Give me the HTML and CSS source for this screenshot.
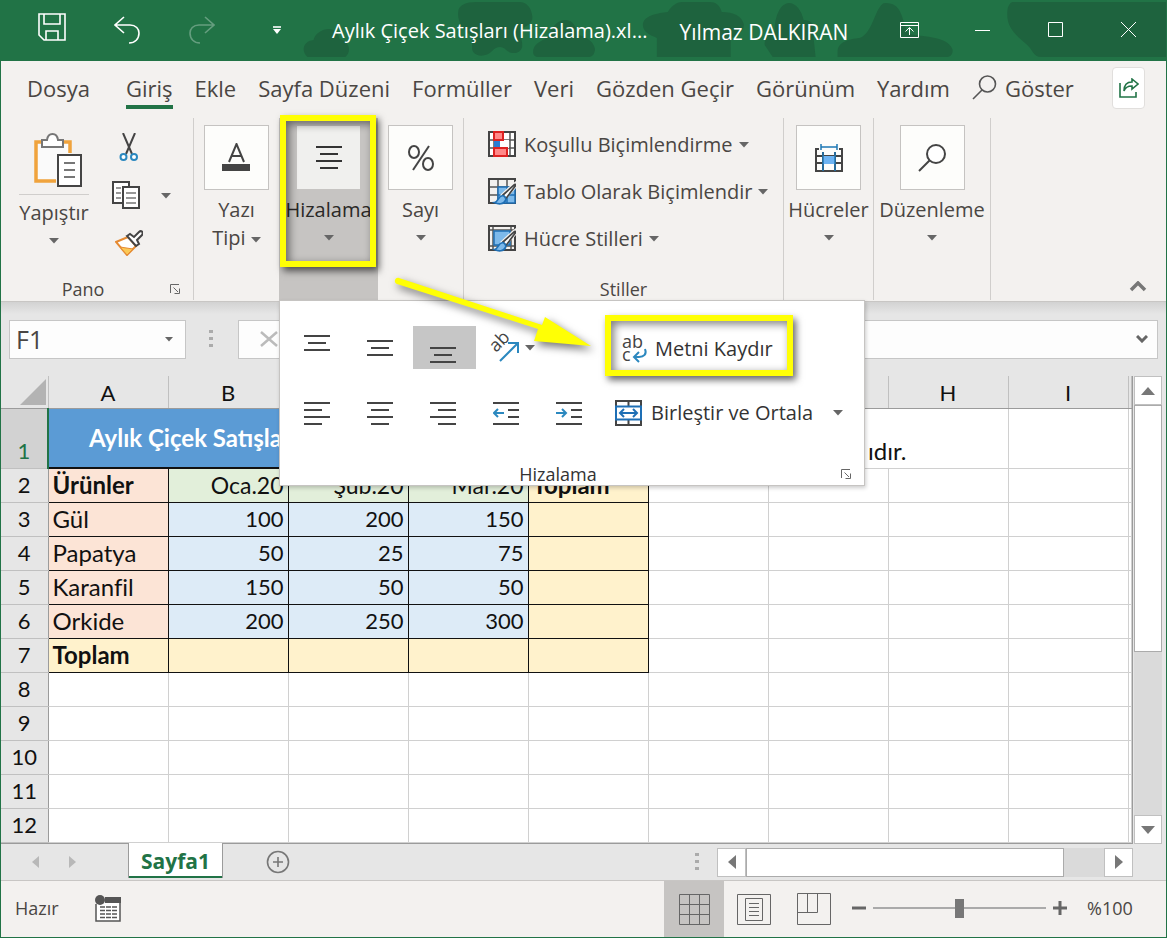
FILE: index.html
```html
<!DOCTYPE html>
<html lang="tr">
<head>
<meta charset="utf-8">
<title>Aylık Çiçek Satışları (Hizalama)</title>
<link rel="stylesheet" href="styles.css">
</head>
<body>
<svg class="defs" aria-hidden="true">
  <symbol id="caret" viewBox="0 0 10 6"><path d="M0 0h10L5 5.500z" fill="currentColor"/></symbol>
  <symbol id="launcher" viewBox="0 0 10 10"><path d="M.5 9V.5H9M3.500 3.500 8 8M9.500 4.500v5h-5" fill="none" stroke="currentColor"/></symbol>
  <symbol id="brush" viewBox="0 0 28 27">
    <path d="M28 3 24 6 12 17l5 5L28 10z" fill="#f3f1ef"/>
    <path d="M15 17 26.500 6.500c2-.5 1 1.500 0 2.500L18 20.500z" fill="#fff" stroke="#444" stroke-width="1.700"/>
    <path d="M14.500 17.500c2 .5 4 2.500 3 5-2 4-7 4-11 2 4-.5 3-6 8-7z" fill="#7db9ea" stroke="#1e6fb5" stroke-width="1.700"/>
  </symbol>
</svg>
<div class="app">
  <header class="titlebar">
    <svg class="camo" viewBox="0 0 1167 61" preserveAspectRatio="none" aria-hidden="true">
      <path d="M307 57c-7-6-4-16 6-17 2-7 9-11 15-11s10 4 11 10c9 1 13 12 6 18zM458 12c0-7 8-10 18-10h43c8 0 12 6 13 13 2 8-6 11-11 14-2 7 2 12 1 18-2 8-12 7-16 3-5-5-10-3-14 1-5 5-14 7-19 1-3-5 1-12-3-17-8-6-13-14-12-23zM533 52c0-8 8-11 15-15 3-9 9-17 17-17 9 0 11 8 14 15 8 2 15 7 16 14 0 5-3 8-6 8h-50c-4 0-6-2-6-5zM643 25c0-9 14-12 25-13 4-7 10-10 14-10h28c6 0 10 3 12 10 12 0 20 4 22 12 1 9-10 11-13 15v18h-74v-19c-7-3-14-6-14-13zM765 45c-1-7 5-10 10-14 0-14 5-27 14-28 8 0 13 8 15 17 10 0 12 7 10 18l2 19h-43zM838 52c0-10 11-13 22-14 14-4 16-35 26-35 17 0 16 16 22 29 3 6 39 1 45 17 1 4-1 8-6 8H838zM1013 2h154v55h-125c-8 0-9-8-14-12-9-8-20-16-20-30 0-7 1-11 5-13z"/>
    </svg>
    <nav class="quick" aria-label="Hızlı erişim">
      <button aria-label="Kaydet"><svg width="28" height="28" viewBox="0 0 28 28"><path d="M1 1h26v26H6l-5-5zM6 1v10h16V1M8 27v-9h12v9"/></svg></button>
      <button aria-label="Geri al"><svg width="26" height="28" viewBox="0 0 26 28"><path d="M10 1 1 9l9 8M1 9h15c6 0 9 4 9 8 0 6-4 10-10 10"/></svg></button>
      <button class="faded" aria-label="Yinele"><svg width="26" height="28" viewBox="0 0 26 28"><path d="m16 1 9 8-9 8M25 9H10c-6 0-9 4-9 8 0 6 4 10 10 10"/></svg></button>
      <button aria-label="Özelleştir"><svg width="8" height="8" viewBox="0 0 8 8"><path d="M0 1h8" /><path class="solid" d="M0 3h8L4 8z"/></svg></button>
    </nav>
    <h1 class="doc">Aylık Çiçek Satışları (Hizalama).xl...</h1>
    <span class="user">Yılmaz DALKIRAN</span>
    <div class="winbtns">
      <button aria-label="Şerit seçenekleri"><svg width="19" height="16" viewBox="0 0 19 16"><path d="M.5.5h18v15H.5zM.5 3.500h18M9.500 13V6M5.500 9.500l4-4 4 4"/></svg></button>
      <button aria-label="Küçült"><svg width="15" height="16" viewBox="0 0 15 16"><path d="M0 8.500h15"/></svg></button>
      <button aria-label="Ekranı kapla"><svg width="15" height="16" viewBox="0 0 15 16"><path d="M.5.5h14v14H.5z"/></svg></button>
      <button aria-label="Kapat"><svg width="15" height="16" viewBox="0 0 15 16"><path d="m0 0 15 15M15 0 0 15"/></svg></button>
    </div>
  </header>

  <nav class="tabs">
    <a href="#" class="file">Dosya</a>
    <a href="#" class="current">Giriş</a>
    <a href="#">Ekle</a>
    <a href="#">Sayfa Düzeni</a>
    <a href="#">Formüller</a>
    <a href="#">Veri</a>
    <a href="#">Gözden Geçir</a>
    <a href="#">Görünüm</a>
    <a href="#">Yardım</a>
    <a href="#" class="tell"><svg width="25" height="25" viewBox="0 0 25 25"><circle cx="15.500" cy="9" r="8"/><path d="m10 15-9 9"/></svg>Göster</a>
    <button class="share" aria-label="Paylaş"><svg width="20" height="20" viewBox="0 0 20 20"><path d="M1 5v14h16v-5M13 1l6 5-6 5V8C9 8 6 10 5 13c0-6 3-9 8-9z"/></svg></button>
  </nav>

  <section class="ribbon">
    <div class="group clip">
      <div class="cliprow">
        <button class="paste">
          <svg width="48" height="54" viewBox="0 0 48 54">
            <path d="M2 9h34v38H2z" fill="#fafafa"/>
            <path d="M8 9H2v39h20M30 9h6v11" fill="none" stroke="#f0a33c" stroke-width="3.500"/>
            <path d="M8 14V7h5c1-8 10-8 11 0h5v7z" fill="#fff" stroke="#777" stroke-width="2"/>
            <path d="M24 22h23v31H24z" fill="#fff" stroke="#444" stroke-width="2"/>
            <path d="M30 30h11M30 37h11M30 44h11" stroke="#777" stroke-width="2"/>
          </svg>
          <span class="pastelabel">Yapıştır</span>
          <svg class="caret"><use href="#caret"/></svg>
        </button>
        <div class="cliptools">
          <button aria-label="Kes"><svg width="20" height="28" viewBox="0 0 20 28"><path d="m4 0 9 21M16 0 7 21" fill="none" stroke="#444" stroke-width="2"/><g fill="#fff" stroke="#2b88bf" stroke-width="2"><circle cx="4.500" cy="24" r="3"/><circle cx="15" cy="24" r="3"/></g></svg></button>
          <button class="copy" aria-label="Kopyala"><svg width="28" height="28" viewBox="0 0 28 28"><g fill="#fff" stroke="#444" stroke-width="2"><path d="M1 1h16v21H1z"/><path d="M11 6h16v21H11z"/></g><path d="M4 7h5M4 12h5M4 17h5M14 12h10M14 17h10M14 22h10" stroke="#777" stroke-width="1.500"/></svg></button>
          <button aria-label="Biçim boyacısı"><svg width="28" height="26" viewBox="0 0 28 26"><path d="M1 12 13 7l8 9-9 9z" fill="#fff" stroke="#e58a32" stroke-width="2"/><path d="m5 17 13 2-6 6z" fill="#fbc956" stroke="#e58a32"/><path d="m12 6 3-2 4 3 5-5c2-2 5 0 3 3l-5 5 2 4-3 2z" fill="#fff" stroke="#444" stroke-width="2"/></svg></button>
        </div>
        <button class="copymenu" aria-label="Kopyala seçenekleri"><svg class="caret"><use href="#caret"/></svg></button>
      </div>
      <div class="caption">Pano<svg class="launch"><use href="#launcher"/></svg></div>
    </div>

    <div class="group narrow">
      <button class="big"><span class="tile"><svg width="29" height="29" viewBox="0 0 29 29"><path d="M7 19 14.500 1 22 19M9.500 13h10" fill="none" stroke="#444" stroke-width="2"/><path d="M0 21h28v7H0z" fill="#444"/></svg></span><span>Yazı<br>Tipi <svg class="caret"><use href="#caret"/></svg></span></button>
    </div>

    <div class="group align">
      <button class="big"><span class="tile"><svg width="26" height="26" viewBox="0 0 26 26"><path d="M0 2h26M4 9h18M0 16h26M4 23h18" stroke="#333" stroke-width="2"/></svg></span><span>Hizalama</span><svg class="caret"><use href="#caret"/></svg></button>
      <div class="popup">
        <div class="tools">
          <button aria-label="Üste hizala"><svg width="26" height="34" viewBox="0 0 26 34"><path d="M0 5h26M4 12h18M0 19h26"/></svg></button>
          <button aria-label="Ortaya hizala"><svg width="26" height="34" viewBox="0 0 26 34"><path d="M0 10h26M4 17h18M0 24h26"/></svg></button>
          <button class="on" aria-label="Alta hizala"><svg width="26" height="34" viewBox="0 0 26 34"><path d="M0 17h26M4 24h18M0 31h26"/></svg></button>
          <button class="orient" aria-label="Yönlendirme"><svg width="29" height="30" viewBox="0 0 29 30"><text x="6" y="20" transform="rotate(-45 6 20)" class="glyph">ab</text><path class="blue" d="m10 28 17-17M18 10h10v10"/></svg><svg class="caret"><use href="#caret"/></svg></button>
          <span></span>
          <button class="wrap"><svg width="26" height="28" viewBox="0 0 26 28"><text x="0" y="13" class="glyph">ab</text><text x="0" y="26" class="glyph">c</text><path class="blue" d="M23 14c2 5-1 8-6 8h-5M17 17l-5 5 5 5"/></svg>Metni Kaydır</button>
          <button aria-label="Sola hizala"><svg width="26" height="24" viewBox="0 0 26 24"><path d="M0 2h26M0 9h18M0 16h26M0 23h18"/></svg></button>
          <button aria-label="Ortala"><svg width="26" height="24" viewBox="0 0 26 24"><path d="M0 2h26M4 9h18M0 16h26M4 23h18"/></svg></button>
          <button aria-label="Sağa hizala"><svg width="26" height="24" viewBox="0 0 26 24"><path d="M0 2h26M8 9h18M0 16h26M8 23h18"/></svg></button>
          <button aria-label="Girintiyi azalt"><svg width="26" height="24" viewBox="0 0 26 24"><path d="M0 2h26M15 9h11M15 16h11M0 23h26"/><path class="blue" d="M11 12H1M5 8l-4 4 4 4"/></svg></button>
          <button aria-label="Girintiyi artır"><svg width="26" height="24" viewBox="0 0 26 24"><path d="M0 2h26M15 9h11M15 16h11M0 23h26"/><path class="blue" d="M0 12h10M6 8l4 4-4 4"/></svg></button>
          <button class="merge"><svg width="27" height="26" viewBox="0 0 27 26"><path d="M1 1h25v24H1zM13.500 1v5M13.500 20v5"/><path class="navy" d="M1 6.500h25v13H1zM5 13h17M9 9l-4 4 4 4M18 9l4 4-4 4"/></svg>Birleştir ve Ortala<svg class="caret"><use href="#caret"/></svg></button>
        </div>
        <div class="caption">Hizalama<svg class="launch"><use href="#launcher"/></svg></div>
      </div>
      <svg class="arrow" width="210" height="90" viewBox="0 0 210 90" aria-hidden="true"><path d="m13 10 141 45-4 12 57 5-46-29-3 8L15 4c-4-1-6 4-2 6z"/></svg>
      <div class="mark mark-group"></div>
      <div class="mark mark-wrap"></div>
    </div>

    <div class="group narrow ruled">
      <button class="big"><span class="tile"><svg width="28" height="28" viewBox="0 0 28 28"><g fill="none" stroke="#444" stroke-width="2"><ellipse cx="7" cy="8" rx="5" ry="6"/><ellipse cx="21" cy="20" rx="5" ry="6"/><path d="M22 2 6 26"/></g></svg></span><span>Sayı</span><svg class="caret"><use href="#caret"/></svg></button>
    </div>

    <div class="group styles ruled">
      <div class="stylelist">
        <button><svg width="28" height="27" viewBox="0 0 28 27"><path d="M1 1h26v24H1zM1 9h26M1 17h26M14 1v24M22 1v24M6 1v24" fill="#fff" stroke="#555" stroke-width="1.500"/><path d="M1 1h26v24H1z" fill="none" stroke="#444" stroke-width="2"/><path d="M12 9h9v8h-9z" fill="#fff"/><path d="M6 1h9v8H6zM6 17h13v8H6z" fill="#f88" stroke="#d22" stroke-width="2"/><path d="M6 10h6v6H6z" fill="#2b7cd3"/></svg>Koşullu Biçimlendirme<svg class="caret"><use href="#caret"/></svg></button>
        <button><svg width="28" height="27" viewBox="0 0 28 27"><path d="M10 1v24M19 1v24M1 9h26M1 17h26" stroke="#555" stroke-width="1.500"/><path d="M1 1h26v24H1z" fill="none" stroke="#444" stroke-width="2"/><path d="M10 9h17v16H10zM10 17h17M19 9v16" fill="#7db9ea" stroke="#1e6fb5" stroke-width="1.500"/><use href="#brush" width="28" height="27"/></svg>Tablo Olarak Biçimlendir<svg class="caret"><use href="#caret"/></svg></button>
        <button><svg width="28" height="27" viewBox="0 0 28 27"><path d="M1 5h26M1 21h26M5 1v24M23 1v24" stroke="#555" stroke-width="1.500"/><path d="M1 1h26v24H1z" fill="none" stroke="#444" stroke-width="2"/><path d="M6 6h16v14H6z" fill="#7db9ea" stroke="#1e6fb5" stroke-width="1.500"/><use href="#brush" width="28" height="27"/></svg>Hücre Stilleri<svg class="caret"><use href="#caret"/></svg></button>
      </div>
      <div class="caption">Stiller</div>
    </div>

    <div class="group cells ruled">
      <button class="big"><span class="tile"><svg width="28" height="28" viewBox="0 0 28 28"><path d="M4 5H1v22h26V5h-3M1 12h26M1 19h26M8 8v19M20 8v19" fill="none" stroke="#444" stroke-width="2"/><path d="M8 12h12v8H8z" fill="#6db3f2"/><path d="M8 8v19M20 8v19M6 3h16M6 0v6M22 0v6" fill="none" stroke="#1e78b5" stroke-width="1.500"/></svg></span><span>Hücreler</span><svg class="caret"><use href="#caret"/></svg></button>
    </div>
    <div class="group edit ruled">
      <button class="big"><span class="tile"><svg width="28" height="28" viewBox="0 0 28 28"><path d="m1 27 11-11" stroke="#444" stroke-width="2"/><circle cx="18" cy="10" r="9" fill="#fff" stroke="#444" stroke-width="2"/></svg></span><span>Düzenleme</span><svg class="caret"><use href="#caret"/></svg></button>
    </div>
    <button class="collapse" aria-label="Şeridi daralt"><svg width="18" height="11" viewBox="0 0 18 11"><path d="m2 9 7-7 7 7" fill="none" stroke="#777" stroke-width="3.500"/></svg></button>
  </section>

  <section class="formula">
    <div class="namebox"><input aria-label="Ad kutusu" value="F1"><svg class="caret small"><use href="#caret"/></svg></div>
    <svg class="dots" width="4" height="18" viewBox="0 0 4 18"><path d="M0 0h4v3H0zM0 7h4v3H0zM0 14h4v3H0z"/></svg>
    <div class="entry"><button aria-label="İptal"><svg width="18" height="16" viewBox="0 0 18 16"><path d="m1 1 16 14M17 1 1 15" stroke="#bbb" stroke-width="2.500"/></svg></button></div>
    <div class="fxbox"><input aria-label="Formül"><svg width="12" height="8" viewBox="0 0 12 8"><path d="m1 1 5 5 5-5" fill="none" stroke="#666" stroke-width="3"/></svg></div>
  </section>

  <main class="workarea">
    <div class="sheetwrap">
      <table class="sheet">
        <colgroup><col class="rh"><col class="c"><col class="c"><col class="c"><col class="c"><col class="c"><col class="c"><col class="c"><col class="c"><col class="c"><col></colgroup>
        <thead><tr><th class="corner"><svg width="26" height="26" viewBox="0 0 26 26"><path d="M26 0v26H0z" fill="#b3b3b3"/></svg></th><th>A</th><th>B</th><th>C</th><th>D</th><th>E</th><th>F</th><th>G</th><th>H</th><th>I</th><th></th></tr></thead>
        <tbody>
          <tr class="first"><th>1</th><td class="heading" colspan="5">Aylık Çiçek Satışları</td><td class="note" colspan="3">ıdır.</td><td></td><td></td></tr>
          <tr class="data"><th>2</th><td class="p b">Ürünler</td><td class="g n">Oca.20</td><td class="g n">Şub.20</td><td class="g n">Mar.20</td><td class="y b">Toplam</td><td></td><td></td><td></td><td></td><td></td></tr>
          <tr class="data"><th>3</th><td class="p">Gül</td><td class="u n">100</td><td class="u n">200</td><td class="u n">150</td><td class="y"></td><td></td><td></td><td></td><td></td><td></td></tr>
          <tr class="data"><th>4</th><td class="p">Papatya</td><td class="u n">50</td><td class="u n">25</td><td class="u n">75</td><td class="y"></td><td></td><td></td><td></td><td></td><td></td></tr>
          <tr class="data"><th>5</th><td class="p">Karanfil</td><td class="u n">150</td><td class="u n">50</td><td class="u n">50</td><td class="y"></td><td></td><td></td><td></td><td></td><td></td></tr>
          <tr class="data"><th>6</th><td class="p">Orkide</td><td class="u n">200</td><td class="u n">250</td><td class="u n">300</td><td class="y"></td><td></td><td></td><td></td><td></td><td></td></tr>
          <tr class="data"><th>7</th><td class="y b">Toplam</td><td class="y"></td><td class="y"></td><td class="y"></td><td class="y"></td><td></td><td></td><td></td><td></td><td></td></tr>
          <tr><th>8</th><td></td><td></td><td></td><td></td><td></td><td></td><td></td><td></td><td></td><td></td></tr>
          <tr><th>9</th><td></td><td></td><td></td><td></td><td></td><td></td><td></td><td></td><td></td><td></td></tr>
          <tr><th>10</th><td></td><td></td><td></td><td></td><td></td><td></td><td></td><td></td><td></td><td></td></tr>
          <tr><th>11</th><td></td><td></td><td></td><td></td><td></td><td></td><td></td><td></td><td></td><td></td></tr>
          <tr><th>12</th><td></td><td></td><td></td><td></td><td></td><td></td><td></td><td></td><td></td><td></td></tr>
        </tbody>
      </table>
    </div>
    <div class="vscroll">
      <button aria-label="Yukarı"><svg width="14" height="8" viewBox="0 0 14 8"><path d="M0 8h14L7 0z"/></svg></button>
      <div class="vthumb"></div>
      <button class="end" aria-label="Aşağı"><svg width="14" height="8" viewBox="0 0 14 8"><path d="M0 0h14L7 8z"/></svg></button>
    </div>
  </main>

  <section class="sheetbar">
    <div class="sheetnav">
      <button aria-label="Önceki sayfa"><svg width="7" height="12" viewBox="0 0 7 12"><path d="M7 0v12L0 6z" fill="#b8b8b8"/></svg></button>
      <button aria-label="Sonraki sayfa"><svg width="7" height="12" viewBox="0 0 7 12"><path d="M0 0v12l7-6z" fill="#b8b8b8"/></svg></button>
    </div>
    <button class="sheettab">Sayfa1</button>
    <button class="add" aria-label="Yeni sayfa"><svg width="24" height="24" viewBox="0 0 24 24"><circle cx="12" cy="12" r="10.500"/><path d="M12 7v10M7 12h10"/></svg></button>
    <svg class="dots" width="4" height="18" viewBox="0 0 4 18"><path d="M0 0h4v3H0zM0 7h4v3H0zM0 14h4v3H0z"/></svg>
    <div class="hscroll">
      <button aria-label="Sola"><svg width="8" height="14" viewBox="0 0 8 14"><path d="M8 0v14L0 7z"/></svg></button>
      <div class="hthumb"></div>
      <button class="end" aria-label="Sağa"><svg width="8" height="14" viewBox="0 0 8 14"><path d="M0 0v14l8-7z"/></svg></button>
    </div>
  </section>

  <footer class="status">
    <span>Hazır</span>
    <button class="macro" aria-label="Makro kaydet"><svg width="27" height="27" viewBox="0 0 27 27"><path d="M1 9v17h24V3" fill="#fff" stroke="#555" stroke-width="1.500"/><path d="M10 2h16v6H10z" fill="#555"/><circle cx="5" cy="5" r="5" fill="#555"/><path d="M5 12h17M5 15.500h17M5 19h17M5 22.500h17" stroke="#555" stroke-width="1.500" stroke-dasharray="5 1"/></svg></button>
    <div class="views">
      <button class="on" aria-label="Normal"><svg width="31" height="31" viewBox="0 0 31 31"><path d="M.5.5h30v30H.5zM10.500.5v30M20.500.5v30M.5 10.500h30M.5 20.500h30"/></svg></button>
      <button aria-label="Sayfa düzeni"><svg width="34" height="31" viewBox="0 0 34 31"><path d="M.5.5h33v30H.5zM8.500 4.500h17v22h-17zM12 9.500h10M12 13.500h10M12 17.500h10M12 21.500h10"/></svg></button>
      <button aria-label="Sayfa sonu önizleme"><svg width="34" height="32" viewBox="0 0 34 32"><path d="M.5.5h33v31H.5zM10.500.5v19M.5 19.500h20V.5"/></svg></button>
    </div>
    <button aria-label="Uzaklaştır"><svg width="14" height="14" viewBox="0 0 14 14"><path d="M0 7h14" stroke="#666" stroke-width="3"/></svg></button>
    <input class="zoom" type="range" min="0" max="100" value="50" aria-label="Yakınlaştırma">
    <button aria-label="Yakınlaştır"><svg width="14" height="14" viewBox="0 0 14 14"><path d="M0 7h14M7 0v14" stroke="#666" stroke-width="3"/></svg></button>
    <span class="pct">%100</span>
  </footer>
</div>
</body>
</html>
```
FILE: styles.css
```css
* { box-sizing: border-box; }
body {
  margin: 0;
  font-family: "Open Sans", "Noto Sans", sans-serif;
  font-size: 20px;
  color: #4a4643;
  background: #f3f1ef;
}
button, input { font: inherit; color: inherit; margin: 0; padding: 0; border: 0; background: none; }
button, a { display: flex; align-items: center; justify-content: center; }
a { color: inherit; text-decoration: none; }
svg { display: block; flex: none; }
.defs { position: absolute; width: 0; height: 0; }
.caret { width: 10px; height: 6px; color: #666; }
.caret.small { width: 8px; height: 5px; }

.app {
  display: flex;
  flex-direction: column;
  min-height: 100vh;
  border: 1px solid #217346;
  border-top: 0;
}

/* title bar */
.titlebar { position: relative; display: flex; height: 61px; padding: 0 1px 0 13px; background: #217346; color: #fff; }
.camo { position: absolute; inset: 0; width: 100%; height: 100%; fill: #1e633e; }
.quick, .winbtns, .doc, .user { position: relative; }
.quick, .winbtns { display: flex; }
.quick button { width: 75px; height: 54px; }
.quick button + button { height: 60px; }
.winbtns { margin-left: auto; }
.winbtns button { width: 73px; height: 60px; }
.titlebar button svg { fill: none; stroke: #fff; }
.quick svg { stroke-width: 1.6; }
.quick .solid { fill: #fff; stroke: none; }
.faded { opacity: .3; }
.doc { margin: 0 0 0 18px; font-size: 20px; font-weight: 400; line-height: 61px; white-space: nowrap; }
.user { margin-left: 32px; font-size: 21px; line-height: 64px; white-space: nowrap; }

/* ribbon tabs */
.tabs { display: flex; align-items: center; gap: 22px; height: 53px; padding: 0 21px 0 26px; font-size: 22px; white-space: nowrap; }
.tabs a { height: 42px; border-bottom: 4px solid transparent; padding-top: 4px; }
.tabs .file { margin-right: 14px; }
.tabs .current { border-color: #217346; }
.tabs .tell { gap: 8px; }
.tell svg { fill: none; stroke: #555; stroke-width: 1.6; }
.share { width: 33px; height: 42px; margin-left: auto; border: 1px solid #e1dfdd; border-radius: 4px; background: #fff; }
.share svg { fill: none; stroke: #217346; stroke-width: 1.6; }

/* ribbon */
.ribbon { display: flex; height: 188px; padding: 4px 0 1px; border-bottom: 1px solid #c8c6c4; }
.group { position: relative; display: flex; flex-direction: column; align-items: stretch; padding-top: 7px; }
.ruled, .clip { border-right: 1px solid #d0cecc; }
.clip { width: 193px; }
.narrow { width: 85px; }
.narrow.ruled { width: 86px; }
.align { width: 99px; background: #c6c4c2; }
.styles { width: 320px; }
.cells { width: 90px; }
.edit { width: 117px; }
.big { flex-direction: column; justify-content: flex-start; line-height: 28px; white-space: nowrap; }
.big > .caret { margin-top: 11px; }
.big span .caret { display: inline-block; vertical-align: middle; }
.tile { display: flex; align-items: center; justify-content: center; width: 65px; height: 65px; margin-bottom: 6px; background: #fdfdfb; border: 1px solid #c5c3c1; }
.align .tile { background: #f0f0ee; border-color: #c6c4c2; }
.align > .big { color: #2a2826; }
.caption { display: flex; align-items: center; justify-content: center; position: relative; height: 22px; margin-top: auto; font-size: 18px; }
.launch { position: absolute; right: 13px; bottom: 6px; width: 10px; height: 10px; color: #666; }
.cliprow { display: flex; padding-left: 15px; }
.clip .caption { padding-right: 28px; }
.paste { flex-direction: column; justify-content: flex-start; width: 76px; padding-top: 8px; }
.paste > svg:first-child { margin-left: 8px; }
.pastelabel { margin: 7px 0 10px; line-height: 30px; border-top: 1px solid #d0cecc; padding-top: 3px; }
.cliptools { display: flex; flex-direction: column; gap: 20px; padding-top: 8px; margin-left: 20px; }
.cliptools button { width: 34px; height: 28px; }
.cliptools .copy { justify-content: flex-start; }
.copymenu { width: 30px; margin-left: 5px; height: 142px; }
.stylelist { display: flex; flex-direction: column; gap: 18px; padding: 5px 0 0 24px; }
.stylelist button { justify-content: flex-start; gap: 8px; height: 29px; }
.stylelist .caret { margin-left: -2px; }
.collapse { margin: auto 19px 8px auto; }

/* alignment menu */
.popup { position: absolute; z-index: 2; top: 100%; left: 0; width: 586px; height: 186px; display: flex; flex-direction: column; background: #fff; border: 1px solid #c6c4c2; box-shadow: 1px 2px 4px rgba(0,0,0,.2); color: #333; }
.tools { display: grid; grid-template-columns: repeat(5, 63px) 1fr; grid-auto-rows: 43px; row-gap: 22px; padding: 25px 0 0 7px; white-space: nowrap; }
.tools button { padding-right: 4px; }
.tools svg { fill: none; stroke: #444; stroke-width: 2; }
.tools .caret { stroke: none; }
.tools .on { background: #c6c6c6; }
.tools .blue { stroke: #2b88bf; stroke-width: 2; }
.tools .navy { stroke: #1e6fb5; }
.tools .glyph { fill: #444; stroke: none; font-size: 18px; }
.tools .orient { gap: 6px; padding: 0 0 0 10px; }
.tools .wrap { justify-content: flex-start; gap: 7px; padding: 2px 0 0 20px; }
.tools .merge { justify-content: flex-start; gap: 9px; padding: 0 0 0 13px; }
.merge .caret { margin-left: 11px; }
.popup .caption { padding-right: 28px; }
.mark { position: absolute; z-index: 3; border: 6px solid #ffff05; box-shadow: 3px 4px 7px rgba(0,0,0,.6), inset 3px 3px 8px rgba(0,0,0,.5); pointer-events: none; }
.mark-group { top: -3px; left: 1px; width: 96px; height: 152px; }
.mark-wrap { top: 197px; left: 326px; width: 188px; height: 61px; }
.arrow { position: absolute; z-index: 3; top: 156px; left: 105px; fill: #ffff05; filter: drop-shadow(3px 4px 4px rgba(0,0,0,.55)); pointer-events: none; }

/* formula bar */
.formula { display: flex; align-items: center; height: 74px; padding: 0 8px; background: linear-gradient(#d2d2d2, #e6e6e6 12px); }
.namebox, .entry, .fxbox { display: flex; align-items: center; height: 39px; background: #fdfdfd; border: 1px solid #c6c6c6; }
.namebox { width: 177px; padding: 0 12px 0 6px; }
.namebox input { flex: 1; min-width: 0; height: 36px; font-size: 25px; line-height: 34px; }
.dots { fill: #ababab; }
.formula .dots { margin: 0 25px 0 23px; }
.entry { width: 150px; padding-left: 21px; }
.fxbox { flex: 1; margin-left: 8px; padding-right: 9px; }
.fxbox input { flex: 1; min-width: 0; }

/* worksheet */
.workarea { display: flex; flex: 1; background: #e6e6e6; }
.sheetwrap { flex: 1; min-width: 0; background: #fff; border-right: 1px solid #9b9b9b; border-bottom: 1px solid #9b9b9b; }
.sheet { width: 100%; table-layout: fixed; border-collapse: collapse; font-family: Lato, "Open Sans", sans-serif; font-size: 22px; line-height: 28px; color: #111; }
.rh { width: 47px; }
.c { width: 120px; }
.sheet th { padding: 0; font-weight: 400; background: #e6e6e6; border: 1px solid #c0c0c0; border-left: 0; }
.sheet thead th { height: 32px; padding-top: 2px; border-top: 0; border-bottom-color: #9b9b9b; }
.sheet .corner svg { margin: 0 0 1px 19px; }
.sheet td { height: 34px; padding: 0 4px; border: 1px solid #d0d0d0; white-space: nowrap; }
.sheet tbody th { border-right-color: #9b9b9b; }
.sheet .first th { height: 60px; padding-bottom: 3px; vertical-align: bottom; background: #d2d2d2; color: #217346; border-right: 2px solid #217346; }
.sheet .heading { padding-left: 40px; background: #5b9bd5; color: #fff; font-size: 24px; font-weight: 700; border-bottom: 2px solid #111; }
.sheet .note { padding: 0 101px 3px 0; font-size: 24px; text-align: right; vertical-align: bottom; }
.sheet .b { font-weight: 700; }
.sheet .n { text-align: right; }
.sheet .p, .sheet .g, .sheet .u, .sheet .y { border: 1px solid #111; }
.sheet .p, .sheet .y { font-size: 24px; }
.sheet .p { background: #fce4d6; }
.sheet .g { background: #e2efda; font-size: 23px; }
.sheet .u { background: #ddebf7; }
.sheet .y { background: #fff2cc; }
.vscroll { display: flex; flex-direction: column; width: 28px; margin: 0 4px 0 1px; background: #dadada; }
.vscroll button, .hscroll button, .vthumb, .hthumb { background: #fff; border: 1px solid #c0c0c0; }
.vscroll button { height: 29px; }
.vscroll svg, .hscroll svg { fill: #777; }
.vthumb { height: 247px; border-color: #ababab; }
.end { margin-top: auto; }

/* sheet tabs */
.sheetbar { display: flex; align-items: center; height: 37px; padding-right: 33px; background: #e6e6e6; border-bottom: 1px solid #c8c6c4; }
.sheetnav { display: flex; gap: 30px; width: 127px; padding-left: 31px; }
.sheettab { height: 35px; width: 95px; margin-bottom: 3px; background: #fff; border: 1px solid #9b9b9b; border-width: 0 1px; box-shadow: inset 0 -2px #217346; color: #217346; font-size: 21px; font-weight: 700; }
.add { margin-left: 43px; margin-right: auto; }
.add svg { fill: none; stroke: #777; stroke-width: 1.6; }
.hscroll { display: flex; width: 416px; height: 29px; margin-left: 18px; background: #dadada; }
.hscroll button { width: 29px; }
.hthumb { width: 318px; border-color: #ababab; }
.hscroll .end { margin: 0 0 0 auto; }

/* status bar */
.status { display: flex; align-items: center; height: 56px; padding: 0 33px 2px 14px; font-size: 18px; }
.macro { margin-left: 36px; margin-right: auto; }
.views { display: flex; align-self: stretch; margin: 0 8px -2px 0; }
.views button { width: 60px; }
.views .on { background: #c6c4c2; }
.views svg { fill: none; stroke: #666; }
.zoom { appearance: none; width: 173px; height: 20px; margin: 0 7px; background: linear-gradient(#aaa, #aaa) center / 100% 2px no-repeat; }
.zoom::-webkit-slider-thumb { appearance: none; width: 9px; height: 19px; background: #777; }
.pct { width: 46px; margin-left: 20px; }
```
